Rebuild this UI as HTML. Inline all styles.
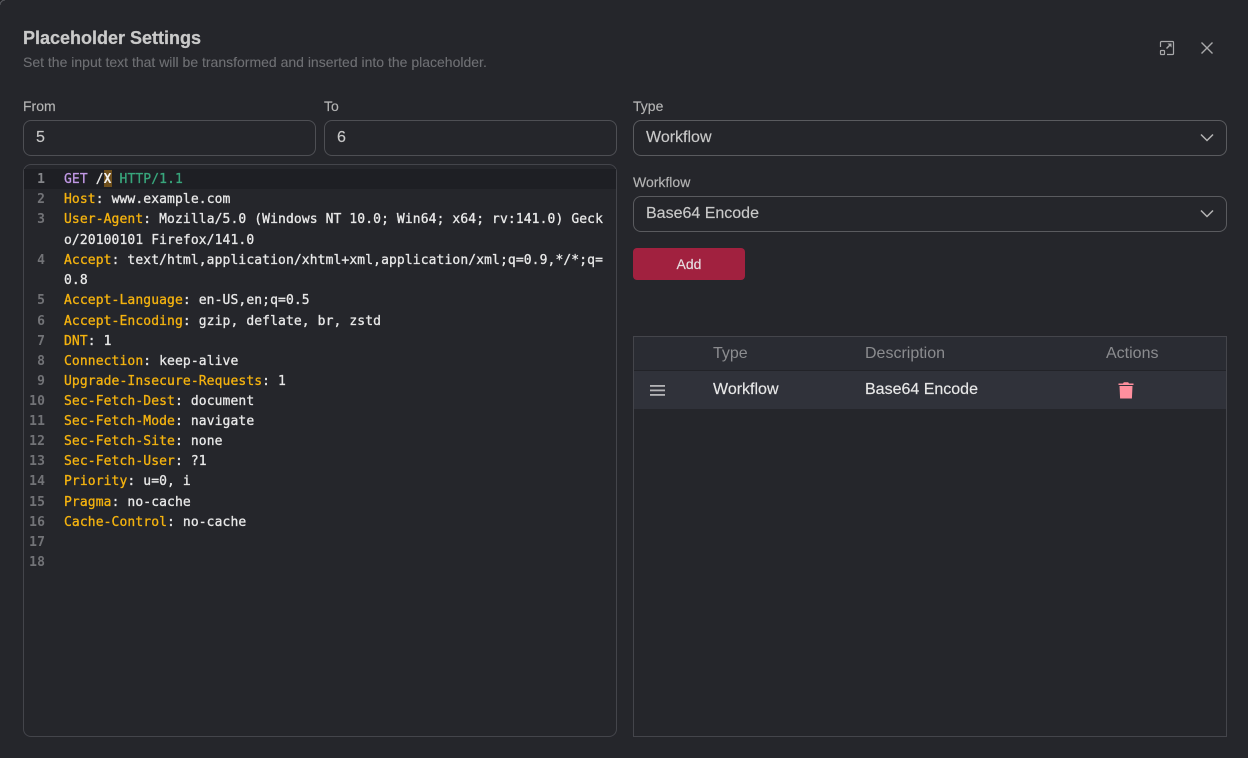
<!DOCTYPE html>
<html><head><meta charset="utf-8"><style>
html,body{margin:0;padding:0;background:#25262b;width:1248px;height:758px;overflow:hidden}
body{position:relative;font-family:"Liberation Sans",sans-serif}
.a{position:absolute;white-space:nowrap}
.box{position:absolute;box-sizing:border-box;border:1px solid #4e4f54;border-radius:8px}
.lab{position:absolute;font-size:14px;line-height:16px;color:#b4b4b4;white-space:nowrap;-webkit-text-stroke:.15px #b4b4b4}
.val{position:absolute;font-size:16px;line-height:18px;color:#c9c9c9;white-space:nowrap;-webkit-text-stroke:.15px #c9c9c9}
.ln{position:absolute;left:24px;width:21px;text-align:right;font:bold 13px/20px "DejaVu Sans Mono",monospace;color:#727377;letter-spacing:.1px}
.c{position:absolute;left:64px;font:13px/20px "DejaVu Sans Mono",monospace;letter-spacing:.1px;color:#e8e8e8;white-space:pre;-webkit-text-stroke:.3px #e8e8e8}
.c b{font-weight:normal;color:#f5b30f;-webkit-text-stroke:.3px #f5b30f}
</style></head><body>
<svg class="a" style="left:0;top:0" width="6" height="6" viewBox="0 0 6 6"><path d="M0 0H5A5 5 0 0 0 0 5Z" fill="#1c1d21"/><path d="M0 5A5 5 0 0 1 5 0" fill="none" stroke="#5a5b60" stroke-width="1"/></svg>
<div class="a" style="left:23px;top:27px;font-size:18px;line-height:22px;font-weight:bold;color:#c9c9c9;-webkit-text-stroke:.25px #c9c9c9">Placeholder Settings</div>
<div class="a" style="left:23px;top:54px;font-size:14px;line-height:16px;color:#6f7074;-webkit-text-stroke:.1px #6f7074">Set the input text that will be transformed and inserted into the placeholder.</div>

<svg class="a" style="left:1158px;top:39px" width="18" height="18" viewBox="0 0 18 18" fill="none" stroke="#a9a9ab" stroke-width="1.200"><path d="M2.500 8V3.500a1 1 0 0 1 1-1h11a1 1 0 0 1 1 1v11a1 1 0 0 1-1 1H9"/><rect x="2.500" y="11.500" width="4" height="4" rx=".8"/><path d="M8.500 9.500L12.500 5.500" stroke-width="1.500"/><path d="M9.500 4.500H13.500V8.500Z" fill="#a9a9ab" stroke="none"/></svg>
<svg class="a" style="left:1198px;top:39px" width="18" height="18" viewBox="0 0 18 18" fill="none" stroke="#a9a9ab" stroke-width="1.400"><path d="M3.500 3.500L14.500 14.500M14.500 3.500L3.500 14.500"/></svg>

<div class="lab" style="left:23px;top:98px">From</div>
<div class="box" style="left:23px;top:120px;width:293px;height:36px"></div>
<div class="val" style="left:36px;top:129px">5</div>
<div class="lab" style="left:324px;top:98px">To</div>
<div class="box" style="left:324px;top:120px;width:293px;height:36px"></div>
<div class="val" style="left:337px;top:129px">6</div>

<div class="box" style="left:23px;top:164px;width:594px;height:573px;border-color:#44454b"></div>
<div class="a" style="left:24px;top:169px;width:592px;height:20px;background:#1e1f24"></div>
<div class="a" style="left:104px;top:170px;width:8px;height:17px;background:#6e4f1c"></div>

<div class="ln" style="top:170px;color:#85868a">1</div>
<div class="c" style="top:170px"><span style="color:#c299e6;-webkit-text-stroke:.3px #c299e6">GET</span> /<span style="font-weight:bold;color:#f0f0f0;-webkit-text-stroke:0">X</span> <span style="color:#38a67c;-webkit-text-stroke:.3px #38a67c">HTTP/1.1</span></div>
<div class="ln" style="top:190px">2</div><div class="c" style="top:190px"><b>Host</b>: www.example.com</div>
<div class="ln" style="top:210px">3</div><div class="c" style="top:210px"><b>User-Agent</b>: Mozilla/5.0 (Windows NT 10.0; Win64; x64; rv:141.0) Geck</div>
<div class="c" style="top:231px">o/20100101 Firefox/141.0</div>
<div class="ln" style="top:251px">4</div><div class="c" style="top:251px"><b>Accept</b>: text/html,application/xhtml+xml,application/xml;q=0.9,*/*;q=</div>
<div class="c" style="top:271px">0.8</div>
<div class="ln" style="top:291px">5</div><div class="c" style="top:291px"><b>Accept-Language</b>: en-US,en;q=0.5</div>
<div class="ln" style="top:312px">6</div><div class="c" style="top:312px"><b>Accept-Encoding</b>: gzip, deflate, br, zstd</div>
<div class="ln" style="top:332px">7</div><div class="c" style="top:332px"><b>DNT</b>: 1</div>
<div class="ln" style="top:352px">8</div><div class="c" style="top:352px"><b>Connection</b>: keep-alive</div>
<div class="ln" style="top:372px">9</div><div class="c" style="top:372px"><b>Upgrade-Insecure-Requests</b>: 1</div>
<div class="ln" style="top:392px">10</div><div class="c" style="top:392px"><b>Sec-Fetch-Dest</b>: document</div>
<div class="ln" style="top:412px">11</div><div class="c" style="top:412px"><b>Sec-Fetch-Mode</b>: navigate</div>
<div class="ln" style="top:432px">12</div><div class="c" style="top:432px"><b>Sec-Fetch-Site</b>: none</div>
<div class="ln" style="top:452px">13</div><div class="c" style="top:452px"><b>Sec-Fetch-User</b>: ?1</div>
<div class="ln" style="top:472px">14</div><div class="c" style="top:472px"><b>Priority</b>: u=0, i</div>
<div class="ln" style="top:493px">15</div><div class="c" style="top:493px"><b>Pragma</b>: no-cache</div>
<div class="ln" style="top:513px">16</div><div class="c" style="top:513px"><b>Cache-Control</b>: no-cache</div>
<div class="ln" style="top:533px">17</div>
<div class="ln" style="top:553px">18</div>

<div class="lab" style="left:633px;top:98px">Type</div>
<div class="box" style="left:633px;top:120px;width:594px;height:36px;border-color:#5a5b5f"></div>
<div class="val" style="left:646px;top:129px">Workflow</div>
<svg class="a" style="left:1199px;top:130px" width="16" height="16" viewBox="0 0 16 16" fill="none" stroke="#b4b4b4" stroke-width="1.500"><path d="M2 4.500l6 6 6-6"/></svg>
<div class="lab" style="left:633px;top:174px">Workflow</div>
<div class="box" style="left:633px;top:196px;width:594px;height:36px;border-color:#5a5b5f"></div>
<div class="val" style="left:646px;top:205px">Base64 Encode</div>
<svg class="a" style="left:1199px;top:206px" width="16" height="16" viewBox="0 0 16 16" fill="none" stroke="#b4b4b4" stroke-width="1.500"><path d="M2 4.500l6 6 6-6"/></svg>

<div class="a" style="left:633px;top:248px;width:112px;height:32px;background:#a1213f;border-radius:4px;color:#e6dde0;font-size:14px;line-height:32px;text-align:center;-webkit-text-stroke:.15px #e6dde0">Add</div>

<div class="a" style="left:633px;top:336px;width:594px;height:401px;box-sizing:border-box;border:1px solid #44454b"></div>
<div class="a" style="left:634px;top:337px;width:592px;height:33px;background:#2a2c33"></div>
<div class="a" style="left:634px;top:370px;width:592px;height:1px;background:#222328"></div>
<div class="a" style="left:634px;top:371px;width:592px;height:38px;background:#30323a"></div>
<div class="a" style="left:713px;top:345px;font-size:16px;line-height:18px;color:#8b8c8f">Type</div>
<div class="a" style="left:865px;top:345px;font-size:16px;line-height:18px;color:#8b8c8f">Description</div>
<div class="a" style="left:1106px;top:345px;font-size:16px;line-height:18px;color:#8b8c8f">Actions</div>
<svg class="a" style="left:650px;top:385px" width="15" height="11" viewBox="0 0 15 11" fill="#b4b4b6"><rect x="0" y="0" width="15" height="1.800"/><rect x="0" y="4.500" width="15" height="1.800"/><rect x="0" y="9" width="15" height="1.800"/></svg>
<div class="a" style="left:713px;top:381px;font-size:16px;line-height:18px;color:#e8e8e8;-webkit-text-stroke:.15px #e8e8e8">Workflow</div>
<div class="a" style="left:865px;top:381px;font-size:16px;line-height:18px;color:#e8e8e8;-webkit-text-stroke:.15px #e8e8e8">Base64 Encode</div>
<svg class="a" style="left:1118px;top:381px" width="16" height="18" viewBox="0 0 16 18" fill="#ff8f9e"><path d="M0.500 2.500h4.500l.8-1.300h4.400l.8 1.300h4.500v1.500H.5z"/><path d="M1.500 5h13l-.6 12.500H2.100z"/></svg>
</body></html>
